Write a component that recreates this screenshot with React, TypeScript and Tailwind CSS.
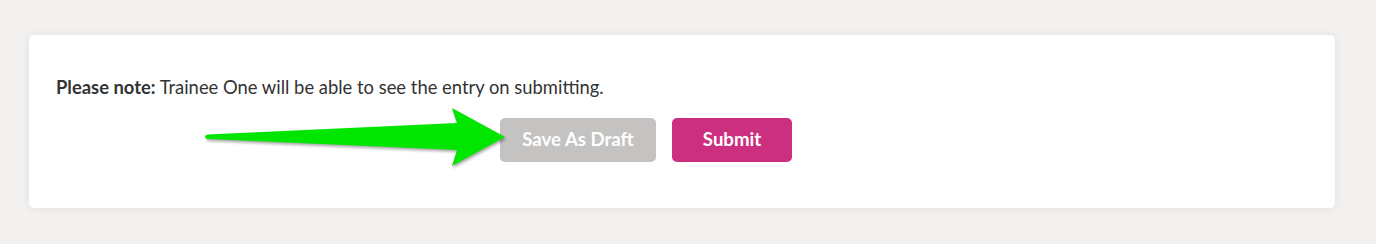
import React from 'react';

function GreenArrow() {
  return (
    <svg
      className="pointer-events-none absolute left-[176px] top-[73px] h-[62px] w-[305px] overflow-visible"
      viewBox="0 0 305 62"
      style={{ filter: 'drop-shadow(1px 2px 1.5px rgba(0,0,0,0.35))' }}
    >
      <path
        d="M3,26.5 L252,15 L247,0 L300,29 L247,58 L252,42 L3,31 Q0,30.5 0,28.75 Q0,27 3,26.5 Z"
        fill="#00e600"
      />
    </svg>
  );
}

export default function App() {
  return (
    <div className="min-h-[244px] w-full bg-[#f2f1ef] px-[29px] pt-[35px] font-['Lato','Liberation_Sans',sans-serif]">
      <div className="relative rounded-[5px] bg-white px-[27px] pb-[46px] pt-[40px] shadow-[0_0_10px_rgba(0,0,0,0.07)] mr-[12px]">
        <p className="text-[18.4px] leading-6 text-[#333]">
          <span className="font-bold">Please note:</span> Trainee One will be able to see the entry on submitting.
        </p>
        <div className="mt-[19px] ml-[444px] flex gap-4">
          <button
            type="button"
            className="h-[44px] w-[156px] rounded-[5px] bg-[#c4c3c1] text-[18.6px] font-bold text-white"
          >
            Save As Draft
          </button>
          <button
            type="button"
            className="h-[44px] w-[120px] rounded-[5px] bg-[#cc2f80] text-[18.6px] font-bold text-white"
          >
            Submit
          </button>
        </div>
        <GreenArrow />
      </div>
    </div>
  );
}
